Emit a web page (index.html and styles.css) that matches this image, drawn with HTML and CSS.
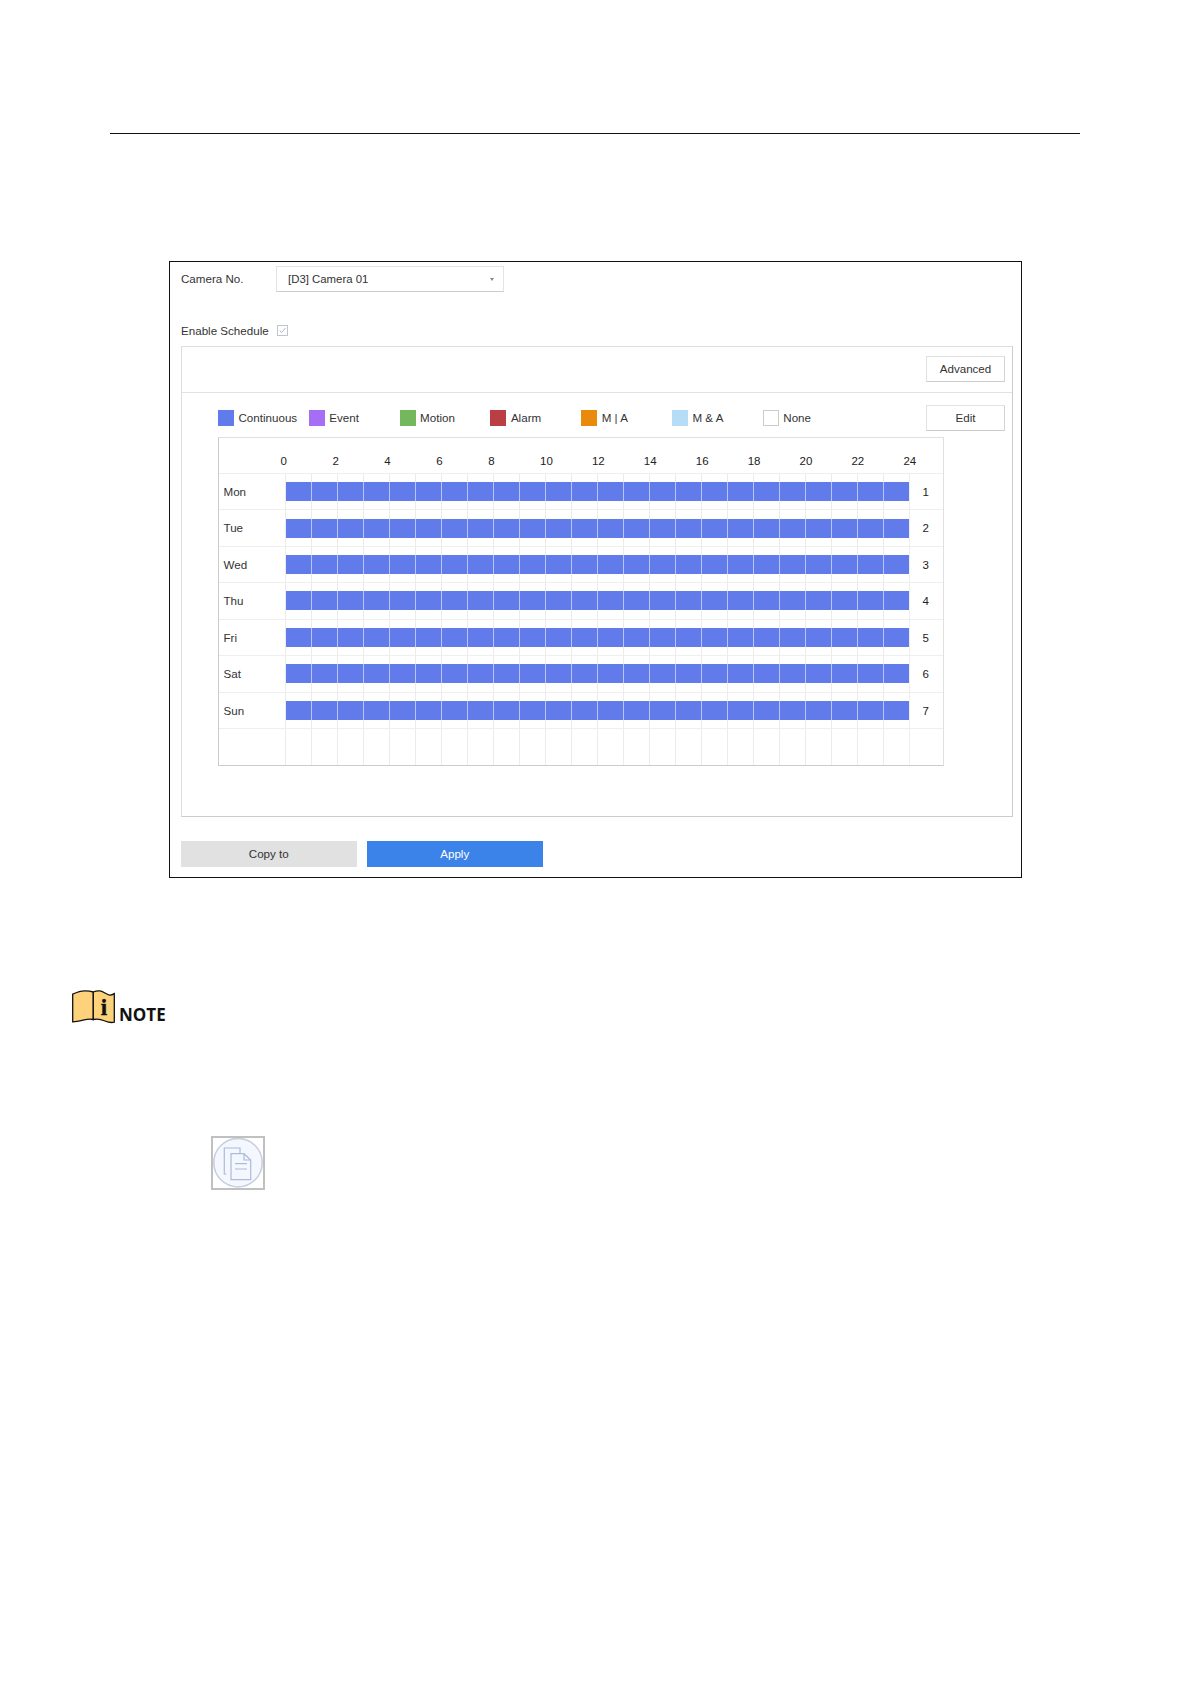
FILE: index.html
```html
<!DOCTYPE html>
<html lang="en">
<head>
<meta charset="utf-8">
<title>Record Schedule</title>
<link rel="stylesheet" href="styles.css">
</head>
<body>
<div class="rule"></div>
<section class="frame">
  <div class="camera-row">
    <span class="field-label">Camera No.</span>
    <div class="select"><span>[D3] Camera 01</span><i class="caret"></i></div>
  </div>
  <div class="enable-row">
    <span>Enable Schedule</span>
    <span class="checkbox"><svg viewBox="0 0 11 11" width="9" height="9"><path d="M2 5.5 4.5 8 9 2.5" fill="none" stroke="#7fa3d8" stroke-width="1"/></svg></span>
  </div>
  <div class="panel">
    <div class="panel-top"><button class="btn">Advanced</button></div>
    <div class="legend-row">
      <div class="legend">
        <div class="legend-item"><i class="swatch continuous"></i>Continuous</div>
        <div class="legend-item"><i class="swatch event"></i>Event</div>
        <div class="legend-item"><i class="swatch motion"></i>Motion</div>
        <div class="legend-item"><i class="swatch alarm"></i>Alarm</div>
        <div class="legend-item"><i class="swatch ma-or"></i>M | A</div>
        <div class="legend-item"><i class="swatch ma-and"></i>M &amp; A</div>
        <div class="legend-item"><i class="swatch none"></i>None</div>
      </div>
      <button class="btn">Edit</button>
    </div>
    <div class="schedule">
      <div class="hours">
        <span>0</span><span>2</span><span>4</span><span>6</span><span>8</span><span>10</span><span>12</span><span>14</span><span>16</span><span>18</span><span>20</span><span>22</span><span>24</span>
      </div>
      <div class="day"><span class="day-name">Mon</span><div class="track on"><i></i><i></i><i></i><i></i><i></i><i></i><i></i><i></i><i></i><i></i><i></i><i></i><i></i><i></i><i></i><i></i><i></i><i></i><i></i><i></i><i></i><i></i><i></i><i></i></div><span class="day-num">1</span></div>
      <div class="day"><span class="day-name">Tue</span><div class="track on"><i></i><i></i><i></i><i></i><i></i><i></i><i></i><i></i><i></i><i></i><i></i><i></i><i></i><i></i><i></i><i></i><i></i><i></i><i></i><i></i><i></i><i></i><i></i><i></i></div><span class="day-num">2</span></div>
      <div class="day"><span class="day-name">Wed</span><div class="track on"><i></i><i></i><i></i><i></i><i></i><i></i><i></i><i></i><i></i><i></i><i></i><i></i><i></i><i></i><i></i><i></i><i></i><i></i><i></i><i></i><i></i><i></i><i></i><i></i></div><span class="day-num">3</span></div>
      <div class="day"><span class="day-name">Thu</span><div class="track on"><i></i><i></i><i></i><i></i><i></i><i></i><i></i><i></i><i></i><i></i><i></i><i></i><i></i><i></i><i></i><i></i><i></i><i></i><i></i><i></i><i></i><i></i><i></i><i></i></div><span class="day-num">4</span></div>
      <div class="day"><span class="day-name">Fri</span><div class="track on"><i></i><i></i><i></i><i></i><i></i><i></i><i></i><i></i><i></i><i></i><i></i><i></i><i></i><i></i><i></i><i></i><i></i><i></i><i></i><i></i><i></i><i></i><i></i><i></i></div><span class="day-num">5</span></div>
      <div class="day"><span class="day-name">Sat</span><div class="track on"><i></i><i></i><i></i><i></i><i></i><i></i><i></i><i></i><i></i><i></i><i></i><i></i><i></i><i></i><i></i><i></i><i></i><i></i><i></i><i></i><i></i><i></i><i></i><i></i></div><span class="day-num">6</span></div>
      <div class="day"><span class="day-name">Sun</span><div class="track on"><i></i><i></i><i></i><i></i><i></i><i></i><i></i><i></i><i></i><i></i><i></i><i></i><i></i><i></i><i></i><i></i><i></i><i></i><i></i><i></i><i></i><i></i><i></i><i></i></div><span class="day-num">7</span></div>
      <div class="day last"><span class="day-name"></span><div class="track"><i></i><i></i><i></i><i></i><i></i><i></i><i></i><i></i><i></i><i></i><i></i><i></i><i></i><i></i><i></i><i></i><i></i><i></i><i></i><i></i><i></i><i></i><i></i><i></i></div><span class="day-num"></span></div>
    </div>
  </div>
  <div class="actions">
    <button class="action copy">Copy to</button>
    <button class="action apply">Apply</button>
  </div>
</section>
<div class="note">
  <svg class="note-icon" viewBox="0 0 43 34" width="43" height="34">
    <path d="M.7 4.2C5 2.2 9 .8 13 .9c3.300.1 6 .5 8.300 1.100V29.500C18 28.700 14.500 29.300 11 30.200 7 31.200 3.500 32 .7 31.900Z" fill="#fdd27b" stroke="#111" stroke-width="1.300"/>
    <path d="M21.300 2C23.500 1 26 .6 28 .9c3.500.6 6.500 3.400 9.500 4.200 1.700.3 3.300-.6 4.800-1.500V32.200C39 33 36 32.300 33 31 29 29.300 25 28.800 21.300 29.500Z" fill="#fdd27b" stroke="#111" stroke-width="1.300"/>
    <text class="note-i" x="32" y="25" text-anchor="middle">i</text>
  </svg>
  <span class="note-text">NOTE</span>
</div>
<div class="doc-tile">
  <svg viewBox="0 0 50 50" width="50" height="50">
    <circle cx="25" cy="24.700" r="24.200" fill="#f4f7fe" stroke="#c6cfdc" stroke-width="1.500"/>
    <g fill="none" stroke="#aabbdc" stroke-width="1.200" transform="translate(-2 0)">
      <path d="M15.500 36H13.300V10H29V15"/>
      <path d="M20 15.700H33L39.700 22V41.700H20Z" fill="#f4f7fe"/>
      <path d="M33 15.700V22H39.700M24 25.700H36M24 31H36"/>
    </g>
  </svg>
</div>
</body>
</html>
```
FILE: styles.css
```css
* { box-sizing: border-box; }
html, body { margin: 0; padding: 0; background: #fff; }
body {
  font-family: "Liberation Sans", Arial, sans-serif;
  font-size: 11.600px;
  line-height: 13px;
  color: #333;
  height: 1684px;
  padding-top: 133px;
}
.rule { height: 1px; width: 970px; margin-left: 110px; background: #111; }

.frame {
  width: 853px;
  height: 617px;
  margin: 127px 0 0 169px;
  padding: 4px 8px 0 11px;
  border: 1px solid #111;
}
.camera-row { display: flex; align-items: center; height: 26px; }
.field-label { width: 95px; padding-bottom: 1px; }
.select {
  width: 228px;
  height: 26px;
  padding: 0 9px 0 11px;
  display: flex;
  align-items: center;
  justify-content: space-between;
  border: 1px solid #e4e4e4;
  border-bottom-color: #ccc;
  font-size: 11.400px;
}
.caret { width: 0; height: 0; border: 2.500px solid transparent; border-top: 3px solid #888; border-bottom: 0; }

.enable-row { display: flex; align-items: center; gap: 8px; height: 30px; margin-top: 24px; padding-bottom: 2px; }
.checkbox {
  width: 11px;
  height: 11px;
  border: 1px solid #c4c4c4;
  display: flex;
  align-items: center;
  justify-content: center;
}

.panel { height: 471px; border: 1px solid #ddd; border-bottom-color: #ccc; border-right-color: #ccc; }
.panel-top {
  height: 46px;
  padding: 9px 7px 0 0;
  display: flex;
  justify-content: flex-end;
  align-items: flex-start;
  border-bottom: 1px solid #e2e2e2;
}
.btn {
  width: 79px;
  height: 26px;
  padding: 0 0 2px;
  font: inherit;
  color: #333;
  background: #fff;
  border: 1px solid #e2e2e2;
  border-bottom-color: #ccc;
  border-right-color: #d4d4d4;
}
.legend-row {
  display: flex;
  justify-content: space-between;
  align-items: center;
  height: 26px;
  margin-top: 12px;
  padding: 0 7px 0 36px;
}
.legend { display: flex; }
.legend-item { display: flex; align-items: center; gap: 4.500px; width: 90.800px; padding-bottom: 2px; white-space: nowrap; }
.swatch { width: 16px; height: 16px; flex: none; margin-top: 2px; }
.continuous { background: #627bea; }
.event { background: #a66ef5; }
.motion { background: #75b75c; }
.alarm { background: #b93f45; }
.ma-or { background: #e98a0d; }
.ma-and { background: #b7dcf6; }
.none { background: #fff; border: 1px solid #ccc; }

.schedule {
  width: 726px;
  height: 329px;
  margin: 6px 0 0 36px;
  border: 1px solid #e0e0e0;
  border-left-color: #ccc;
  border-bottom-color: #ccc;
}
.hours {
  display: flex;
  height: 36px;
  padding: 16px 0 0 61.500px;
  border-bottom: 1px solid #eee;
  font-size: 11.500px;
  line-height: 14px;
  color: #222;
}
.hours span { width: 51.920px; flex: none; }
.day { display: flex; height: 36.430px; border-bottom: 1px solid #eee; }
.day.last { border-bottom: 0; }
.day-name { width: 66px; flex: none; padding-left: 4.500px; line-height: 35px; }
.track { width: 624px; flex: none; display: flex; }
.track i { flex: 1; display: flex; align-items: center; border-left: 1px solid #ebebeb; }
.track.on i::after { content: ""; flex: 1; height: 19px; margin-left: -1px; background: #627bea; border-left: 1px solid #b9c5f4; }
.track.on i:first-child::after { margin-left: 0; border-left: 0; }
.day-num { flex: 1; padding-left: 12.500px; line-height: 36px; font-size: 11.500px; color: #222; border-left: 1px solid #eee; }

.actions { display: flex; gap: 10.500px; margin-top: 24px; }
.action { width: 175.500px; height: 26px; padding: 0 0 2px; border: 0; font: inherit; }
.copy { background: #e1e1e1; color: #333; }
.apply { background: #3b83e8; color: #fff; }

.note { display: flex; align-items: flex-end; gap: 4px; margin: 112px 0 0 72px; }
.note-icon { display: block; flex: none; }
.note-i { font: bold 23px "Liberation Serif", serif; fill: #111; stroke: #111; stroke-width: .4px; }
.note-text { font: bold 17px/19px "Open Sans", sans-serif; color: #111; }

.doc-tile { width: 54px; height: 54px; margin: 112px 0 0 211px; border: 2px solid #c0c0c0; }
.doc-tile svg { display: block; }
```
